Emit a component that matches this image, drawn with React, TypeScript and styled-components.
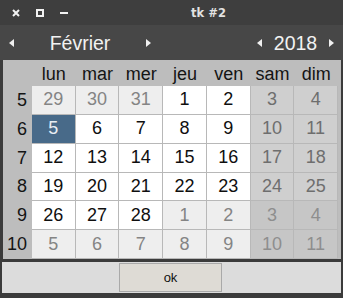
import React from 'react'
import styled, { createGlobalStyle } from 'styled-components'

const GlobalStyle = createGlobalStyle`
    html, body {
        margin: 0;
        padding: 0;
        background: #3b3b3b;
    }
    * {
        box-sizing: border-box;
    }
`

const Window = styled.div`
    width: 343px;
    height: 298px;
    background: #3b3b3b;
    display: flex;
    flex-direction: column;
    font-family: 'Liberation Sans', Arial, sans-serif;
    overflow: hidden;
`

const TitleBar = styled.div`
    height: 25px;
    background: #3e3e3e;
    display: flex;
    align-items: center;
`

const WindowButtons = styled.div`
    display: flex;
    align-items: center;
    gap: 16px;
    padding-left: 12px;
    width: 76px;
`

const Title = styled.div`
    flex: 1;
    text-align: center;
    color: #e2e2e2;
    font-family: 'DejaVu Sans', sans-serif;
    font-weight: 700;
    font-size: 11.5px;
    padding-right: 2px;
`

const NavBar = styled.div`
    height: 35px;
    background: #474747;
    display: flex;
    align-items: center;
    justify-content: space-between;
    padding: 0 9px;
`

const NavGroup = styled.div`
    display: flex;
    align-items: center;
`

const NavLabel = styled.div<{ $width: number }>`
    width: ${(p) => p.$width}px;
    text-align: center;
    color: #f2f2f2;
    font-size: 19.5px;
    line-height: 22px;
`

const Arrow = styled.svg`
    width: 5px;
    height: 8px;
    display: block;
`

const Calendar = styled.div`
    margin: 0 2px 0 3px;
    height: 199px;
    background: #bdbdbd;
    padding-right: 3px;
    display: grid;
    grid-template-columns: 29px repeat(7, 1fr);
    grid-template-rows: 26px repeat(6, 1fr);
`

const DayName = styled.div`
    display: flex;
    align-items: center;
    justify-content: center;
    color: #141414;
    font-size: 18px;
    padding-top: 2px;
`

const WeekNumber = styled.div`
    display: flex;
    align-items: center;
    justify-content: flex-end;
    padding-right: 5px;
    color: #141414;
    font-size: 18px;
`

type DayKind = 'normal' | 'weekend' | 'other' | 'otherWeekend' | 'selected'

const dayColors: Record<DayKind, { bg: string; fg: string }> = {
    normal: { bg: '#ffffff', fg: '#0f0f0f' },
    weekend: { bg: '#cfcfcf', fg: '#6e6e6e' },
    other: { bg: '#eeeeee', fg: '#848484' },
    otherWeekend: { bg: '#c6c6c6', fg: '#8e8e8e' },
    selected: { bg: '#486a89', fg: '#e8eef4' },
}

const DayCell = styled.div<{ $kind: DayKind }>`
    display: flex;
    align-items: center;
    justify-content: center;
    font-size: 18px;
    background: ${(p) => dayColors[p.$kind].bg};
    color: ${(p) => dayColors[p.$kind].fg};
    border-right: 1px solid #b8b8b8;
    border-bottom: 1px solid #b8b8b8;
`

const Spacer = styled.div`
    height: 3px;
`

const ButtonBar = styled.div`
    height: 31px;
    margin: 0 2px;
    background: #dcdcdc;
    display: flex;
    align-items: center;
    padding-left: 117px;
`

const OkButton = styled.button`
    width: 103px;
    height: 29px;
    background: #dedbd5;
    border: 1px solid #a9a9a9;
    font-family: 'Liberation Sans', Arial, sans-serif;
    font-size: 13px;
    color: #111111;
    padding: 0;
`

const LeftArrow = () => (
    <Arrow viewBox="0 0 5 8">
        <polygon points="5,0 5,8 0,4" fill="#f0f0f0" />
    </Arrow>
)

const RightArrow = () => (
    <Arrow viewBox="0 0 5 8">
        <polygon points="0,0 0,8 5,4" fill="#f0f0f0" />
    </Arrow>
)

const CloseIcon = () => (
    <svg width="8" height="8" viewBox="0 0 8 8">
        <path d="M1 1 L7 7 M7 1 L1 7" stroke="#f2f2f2" strokeWidth="2" />
    </svg>
)

const MaxIcon = () => (
    <svg width="8" height="8" viewBox="0 0 8 8">
        <rect x="1" y="1" width="6" height="6" fill="none" stroke="#f2f2f2" strokeWidth="2" />
    </svg>
)

const MinIcon = () => (
    <svg width="8" height="8" viewBox="0 0 8 8">
        <rect x="0" y="3" width="8" height="2" fill="#f2f2f2" />
    </svg>
)

const dayNames = ['lun', 'mar', 'mer', 'jeu', 'ven', 'sam', 'dim']

const weeks: { week: number; days: number[]; firstIn: number; lastIn: number }[] = [
    { week: 5, days: [29, 30, 31, 1, 2, 3, 4], firstIn: 3, lastIn: 6 },
    { week: 6, days: [5, 6, 7, 8, 9, 10, 11], firstIn: 0, lastIn: 6 },
    { week: 7, days: [12, 13, 14, 15, 16, 17, 18], firstIn: 0, lastIn: 6 },
    { week: 8, days: [19, 20, 21, 22, 23, 24, 25], firstIn: 0, lastIn: 6 },
    { week: 9, days: [26, 27, 28, 1, 2, 3, 4], firstIn: 0, lastIn: 2 },
    { week: 10, days: [5, 6, 7, 8, 9, 10, 11], firstIn: -1, lastIn: -2 },
]

const kindOf = (row: number, col: number, firstIn: number, lastIn: number): DayKind => {
    if (row === 1 && col === 0) return 'selected'
    const inMonth = col >= firstIn && col <= lastIn
    const weekend = col >= 5
    if (inMonth) return weekend ? 'weekend' : 'normal'
    return weekend ? 'otherWeekend' : 'other'
}

export default function App(): JSX.Element {
    return (
        <Window>
            <GlobalStyle />
            <TitleBar>
                <WindowButtons>
                    <CloseIcon />
                    <MaxIcon />
                    <MinIcon />
                </WindowButtons>
                <Title>tk #2</Title>
            </TitleBar>
            <NavBar>
                <NavGroup>
                    <LeftArrow />
                    <NavLabel $width={132}>Février</NavLabel>
                    <RightArrow />
                </NavGroup>
                <NavGroup>
                    <LeftArrow />
                    <NavLabel $width={67}>2018</NavLabel>
                    <RightArrow />
                </NavGroup>
            </NavBar>
            <Calendar>
                <div />
                {dayNames.map((name) => (
                    <DayName key={name}>{name}</DayName>
                ))}
                {weeks.map((w, row) => (
                    <React.Fragment key={w.week}>
                        <WeekNumber>{w.week}</WeekNumber>
                        {w.days.map((d, col) => (
                            <DayCell key={col} $kind={kindOf(row, col, w.firstIn, w.lastIn)}>
                                {d}
                            </DayCell>
                        ))}
                    </React.Fragment>
                ))}
            </Calendar>
            <Spacer />
            <ButtonBar>
                <OkButton>ok</OkButton>
            </ButtonBar>
        </Window>
    )
}
